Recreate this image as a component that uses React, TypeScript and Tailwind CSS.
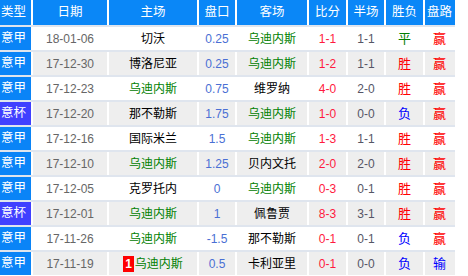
const rows = [
  { t: '意甲', d: '18-01-06', h: '切沃', pk: '0.25', a: '乌迪内斯', s: '1-1', hf: '1-1', r: '平', p: '赢' },
  { t: '意甲', d: '17-12-30', h: '博洛尼亚', pk: '0.25', a: '乌迪内斯', s: '1-2', hf: '1-1', r: '胜', p: '赢' },
  { t: '意甲', d: '17-12-23', h: '乌迪内斯', pk: '0.75', a: '维罗纳', s: '4-0', hf: '2-0', r: '胜', p: '赢' },
  { t: '意杯', d: '17-12-20', h: '那不勒斯', pk: '1.75', a: '乌迪内斯', s: '1-0', hf: '0-0', r: '负', p: '赢' },
  { t: '意甲', d: '17-12-16', h: '国际米兰', pk: '1.5', a: '乌迪内斯', s: '1-3', hf: '1-1', r: '胜', p: '赢' },
  { t: '意甲', d: '17-12-10', h: '乌迪内斯', pk: '1.25', a: '贝内文托', s: '2-0', hf: '2-0', r: '胜', p: '赢' },
  { t: '意甲', d: '17-12-05', h: '克罗托内', pk: '0', a: '乌迪内斯', s: '0-3', hf: '0-1', r: '胜', p: '赢' },
  { t: '意杯', d: '17-12-01', h: '乌迪内斯', pk: '1', a: '佩鲁贾', s: '8-3', hf: '3-1', r: '胜', p: '赢' },
  { t: '意甲', d: '17-11-26', h: '乌迪内斯', pk: '-1.5', a: '那不勒斯', s: '0-1', hf: '0-1', r: '负', p: '赢' },
  { t: '意甲', d: '17-11-19', h: '乌迪内斯', pk: '0.5', a: '卡利亚里', s: '0-1', hf: '0-0', r: '负', p: '输', card: '1' },
];

const cols = 'grid grid-cols-[31px_76px_90px_38px_72px_39px_38px_39px_31px]';
const font = "font-['Liberation_Sans','Noto_Sans_CJK_SC',sans-serif]";

function team(name: string) {
  return name === '乌迪内斯' ? 'text-[#008000]' : 'text-black';
}

function resColor(v: string) {
  if (v === '平') return 'text-[#008000]';
  if (v === '负' || v === '输') return 'text-[#0000ff]';
  return 'text-[#ff0000]';
}

export default function App() {
  const cell = 'flex items-center justify-center border-l-2 border-white';
  return (
    <div className={`w-[468px] h-[276px] bg-white ${font} text-[12px]`}>
      <div className="w-[455px]">
        <div className={`${cols} h-[25px] bg-[#0a87f7] text-white text-[12.5px]`}>
          <div className="flex items-center pl-[1px]">类型</div>
          {['日期', '主场', '盘口', '客场', '比分', '半场', '胜负', '盘路'].map((h) => (
            <div key={h} className={cell}>{h}</div>
          ))}
        </div>
        {rows.map((r, i) => (
          <div
            key={r.d}
            className={`${cols} h-[25px] border-t-2 border-[#dfe5ee] ${i % 2 ? 'bg-[#eeeeee]' : 'bg-white'}`}
          >
            <div
              className={`flex items-center pl-[1px] text-white text-[12.5px] ${r.t === '意杯' ? 'bg-[#4040ff]' : 'bg-[#0a84f7]'}`}
            >
              {r.t}
            </div>
            <div className={`${cell} text-[#666666]`}>{r.d}</div>
            <div className={`${cell} ${team(r.h)}`}>
              {r.card && (
                <span className="bg-[#ff0000] text-white text-[12px] font-bold leading-[16px] px-[2px] mr-[1px]">
                  {r.card}
                </span>
              )}
              {r.h}
            </div>
            <div className={`${cell} text-[#4a6fd4]`}>{r.pk}</div>
            <div className={`${cell} ${team(r.a)}`}>{r.a}</div>
            <div className={`${cell} text-[#ff1a40]`}>{r.s}</div>
            <div className={`${cell} text-[#555566]`}>{r.hf}</div>
            <div className={`${cell} text-[13px] ${resColor(r.r)}`}>{r.r}</div>
            <div className={`${cell} text-[13px] ${resColor(r.p)}`}>{r.p}</div>
          </div>
        ))}
      </div>
    </div>
  );
}
